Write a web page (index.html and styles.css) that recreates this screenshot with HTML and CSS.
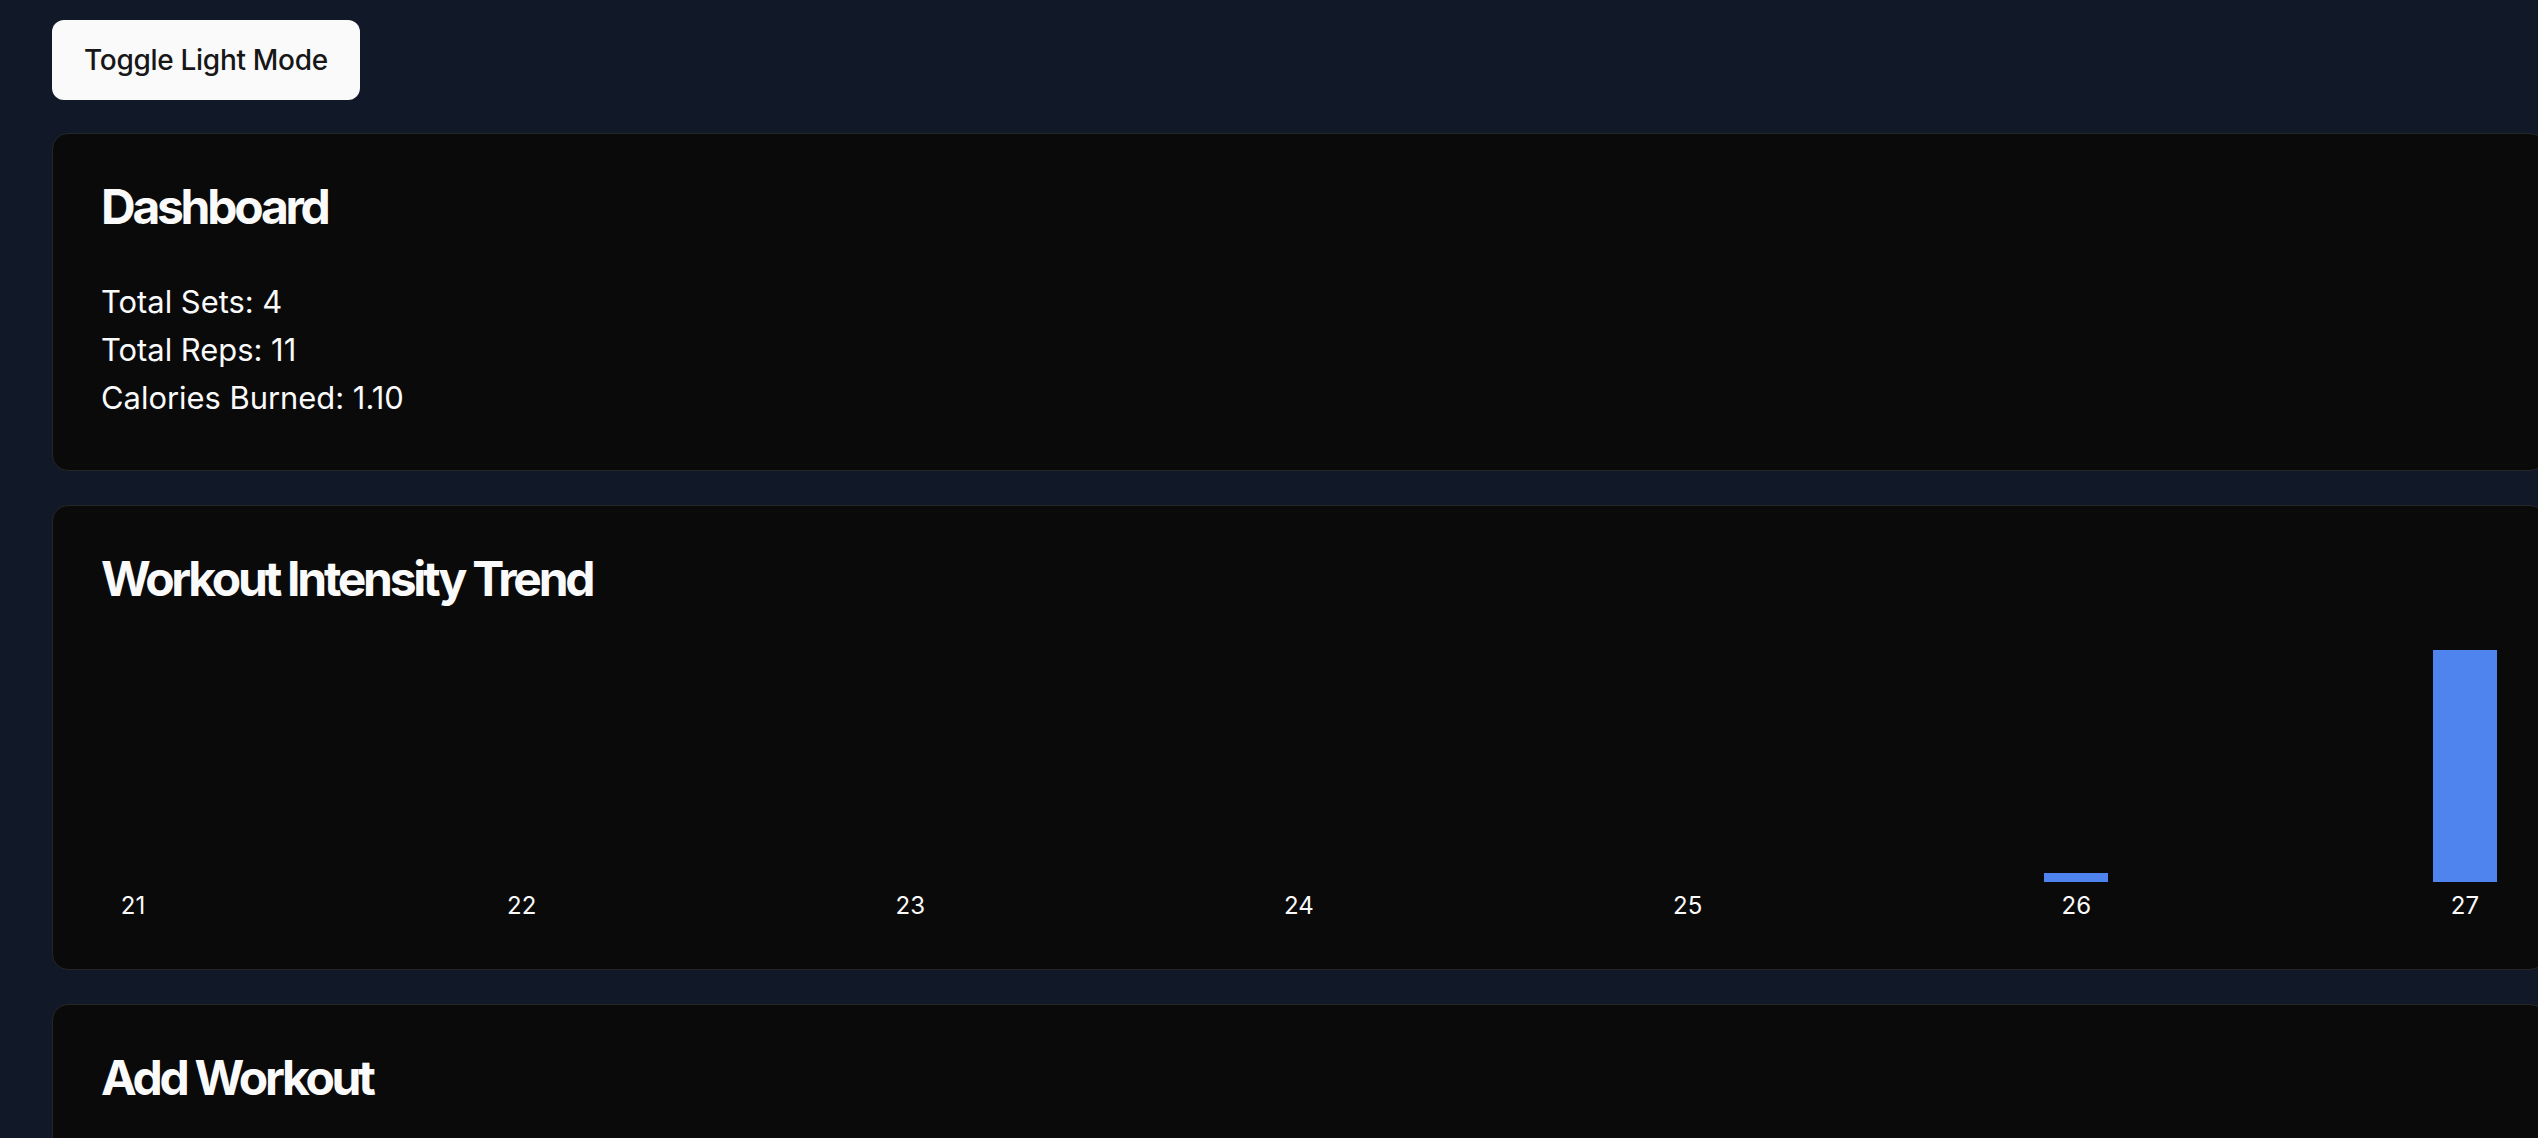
FILE: index.html
```html
<!DOCTYPE html>
<html lang="en">
<head>
<meta charset="utf-8">
<title>Workout Tracker</title>
<link rel="stylesheet" href="styles.css">
</head>
<body>
<main class="page">
  <button class="toggle" type="button">Toggle Light Mode</button>

  <section class="card">
    <h2 class="card-title">Dashboard</h2>
    <div class="stats">
      <p>Total Sets: 4</p>
      <p>Total Reps: 11</p>
      <p>Calories Burned: 1.10</p>
    </div>
  </section>

  <section class="card">
    <h2 class="card-title">Workout Intensity Trend</h2>
    <div class="chart">
      <div class="col"><div class="bar-area"><div class="bar" style="height:0%"></div></div><span class="label">21</span></div>
      <div class="col"><div class="bar-area"><div class="bar" style="height:0%"></div></div><span class="label">22</span></div>
      <div class="col"><div class="bar-area"><div class="bar" style="height:0%"></div></div><span class="label">23</span></div>
      <div class="col"><div class="bar-area"><div class="bar" style="height:0%"></div></div><span class="label">24</span></div>
      <div class="col"><div class="bar-area"><div class="bar" style="height:0%"></div></div><span class="label">25</span></div>
      <div class="col"><div class="bar-area"><div class="bar" style="height:3.9%"></div></div><span class="label">26</span></div>
      <div class="col"><div class="bar-area"><div class="bar" style="height:100%"></div></div><span class="label">27</span></div>
    </div>
  </section>

  <section class="card">
    <h2 class="card-title">Add Workout</h2>
    <div class="stats">
      <p>&nbsp;</p>
    </div>
  </section>
</main>
</body>
</html>
```

FILE: styles.css
```css
html {
  overflow: hidden;
}

body {
  margin: 0;
  background: #111827;
  color: #fafafa;
  font-family: Inter, "Noto Sans", "Liberation Sans", sans-serif;
}

.page {
  display: flex;
  flex-direction: column;
  align-items: flex-start;
  gap: 34px;
  padding: 20px 0 40px 52px;
}

.toggle {
  height: 80px;
  padding: 0 32px;
  margin-bottom: -1px;
  border: none;
  border-radius: 12px;
  background: #fafafa;
  color: #171717;
  font-family: Inter, "Noto Sans", "Liberation Sans", sans-serif;
  font-size: 28px;
  font-weight: 500;
  letter-spacing: -0.3px;
  cursor: pointer;
}

.card {
  box-sizing: border-box;
  width: 2494px;
  padding: 48px;
  background: #0a0a0a;
  border: 1px solid #262626;
  border-radius: 16px;
}

.card-title {
  margin: 0 0 46px;
  font-size: 48px;
  line-height: 50px;
  font-weight: 700;
  letter-spacing: -0.068em;
}

.stats p {
  margin: 0;
  font-size: 30.9px;
  line-height: 48px;
}

.chart {
  display: flex;
  justify-content: space-between;
  align-items: flex-end;
}

.col {
  display: flex;
  flex-direction: column;
  align-items: center;
  width: 64px;
}

.bar-area {
  display: flex;
  align-items: flex-end;
  width: 64px;
  height: 232px;
}

.bar {
  width: 100%;
  background: #4f83ee;
}

.label {
  margin-top: 8px;
  font-size: 24px;
  line-height: 31px;
}
```
